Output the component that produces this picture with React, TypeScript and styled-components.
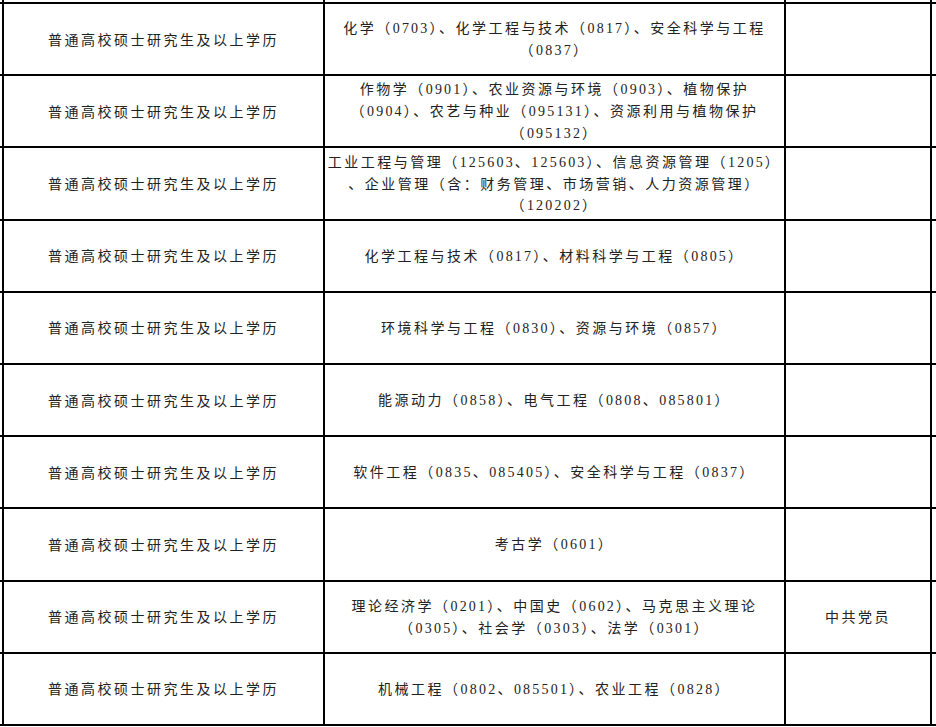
import React from 'react';
import styled, { createGlobalStyle } from 'styled-components';

const GlobalStyle = createGlobalStyle`
  html, body {
    margin: 0;
    padding: 0;
    background: #fff;
    overflow: hidden;
  }
`;

const Sheet = styled.div`
  width: 936px;
  font-family: "Noto Sans CJK SC", sans-serif;
  font-size: 14px;
  line-height: 21px;
  letter-spacing: 2.5px;
  color: #222;
`;

// $stub: the cut-off bottom of the row above the visible part of the table
const Row = styled.div<{ $stub?: boolean }>`
  box-sizing: border-box;
  height: ${p => (p.$stub ? '4px' : '72.2px')};
  display: grid;
  grid-template-columns: 323px 461px 146px;
  padding-left: 2px;
  border-bottom: 2px solid #000;
`;

const Cell = styled.div`
  box-sizing: border-box;
  display: flex;
  flex-direction: column;
  align-items: center;
  justify-content: center;
  text-align: center;
  border-right: 2px solid #000;

  &:first-child {
    border-left: 2px solid #000;
  }
`;

const Line = styled.span`
  display: block;
  white-space: nowrap;
`;

const Num = styled.span`
  font-family: "Liberation Serif", "Times New Roman", "DejaVu Serif", serif;
  letter-spacing: 2.2px;
`;

interface RowData {
  major: string[];
  politics?: string;
}

const EDUCATION = '普通高校硕士研究生及以上学历';

const rows: RowData[] = [
  { major: ['化学（0703）、化学工程与技术（0817）、安全科学与工程', '（0837）'] },
  {
    major: [
      '作物学（0901）、农业资源与环境（0903）、植物保护',
      '（0904）、农艺与种业（095131）、资源利用与植物保护',
      '（095132）',
    ],
  },
  {
    major: [
      '工业工程与管理（125603、125603）、信息资源管理（1205）',
      '、企业管理（含：财务管理、市场营销、人力资源管理）',
      '（120202）',
    ],
  },
  { major: ['化学工程与技术（0817）、材料科学与工程（0805）'] },
  { major: ['环境科学与工程（0830）、资源与环境（0857）'] },
  { major: ['能源动力（0858）、电气工程（0808、085801）'] },
  { major: ['软件工程（0835、085405）、安全科学与工程（0837）'] },
  { major: ['考古学（0601）'] },
  {
    major: ['理论经济学（0201）、中国史（0602）、马克思主义理论', '（0305）、社会学（0303）、法学（0301）'],
    politics: '中共党员',
  },
  { major: ['机械工程（0802、085501）、农业工程（0828）'] },
];

// digits are set in a Times-like face, the rest in the CJK face
const renderText = (text: string) =>
  text.split(/(\d+)/).map((part, k) => (/^\d+$/.test(part) ? <Num key={k}>{part}</Num> : part));

const App = () => {
  return (
    <>
      <GlobalStyle />
      <Sheet>
        <Row $stub>
          <Cell />
          <Cell />
          <Cell />
        </Row>
        {rows.map((row, i) => (
          <Row key={i}>
            <Cell>
              <Line>{EDUCATION}</Line>
            </Cell>
            <Cell>
              {row.major.map((text, j) => (
                <Line key={j}>{renderText(text)}</Line>
              ))}
            </Cell>
            <Cell>{row.politics && <Line>{row.politics}</Line>}</Cell>
          </Row>
        ))}
      </Sheet>
    </>
  );
};

export default App;
